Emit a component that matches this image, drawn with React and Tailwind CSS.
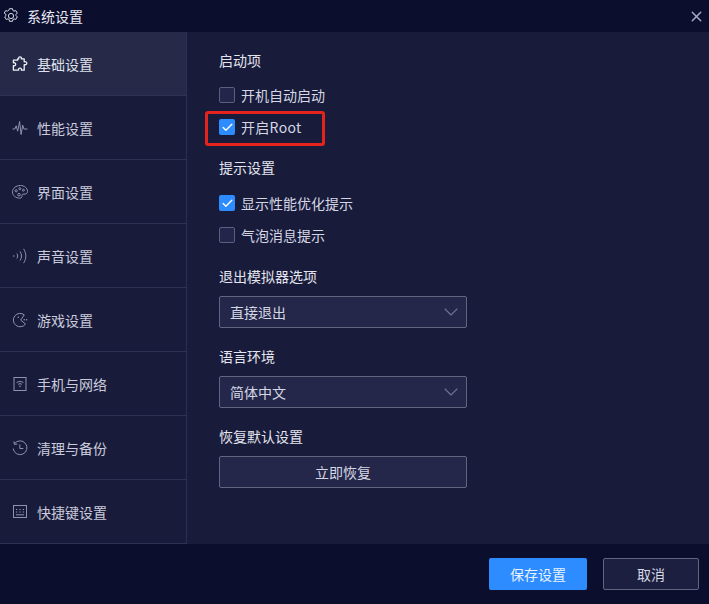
import { FiX, FiChevronDown, FiCheck } from "react-icons/fi";

const FONT = "font-['Noto_Sans_CJK_SC','Noto_Sans',sans-serif]";

// ─── Sidebar icons ───────────────────────────────────────────────────────────
function Gear({ className }) {
  return (
    <svg viewBox="0 0 16 16" className={className} fill="none" stroke="currentColor" strokeWidth="1">
      <path d="M6.500.7h3l.4 1.800 1.100.6 1.800-.5 1.500 2.500-1.300 1.300v1.200l1.300 1.300-1.500 2.500-1.800-.5-1.100.6-.4 1.800h-3l-.4-1.800-1.100-.6-1.800.5-1.500-2.500 1.300-1.300V6.400L1.200 5.100l1.500-2.500 1.800.5 1.100-.6z" strokeLinejoin="round" />
      <circle cx="8" cy="8" r="2.600" />
    </svg>
  );
}

function Puzzle({ className }) {
  return (
    <svg viewBox="0 0 16 16" className={className} fill="none" stroke="currentColor" strokeWidth="1.300" strokeLinejoin="round">
      <path d="M5.600 2.800h1.100C6.300 1 7.200.8 8 .8s1.700.4 1.300 2h2.900v3c1.600-.5 2.600.4 2.600 1.400s-1 1.900-2.600 1.400v5.600H9.400c.4-1.400-.4-2.100-1.400-2.100s-1.800.7-1.400 2.100H1.400V9.600c1.400.5 2.300-.4 2.300-1.400S2.800 6.400 1.400 6.900V4.200h4.200z" />
    </svg>
  );
}

function Pulse({ className }) {
  return (
    <svg viewBox="0 0 16 16" className={className} fill="none" stroke="currentColor" strokeWidth="1">
      <path d="M.5 9h2.300l1.400-3.200 1.500 5.400L7.600 1.500l1.500 13 1.600-9.300 1.200 3.800h3.600" strokeLinejoin="round" />
    </svg>
  );
}

function Palette({ className }) {
  return (
    <svg viewBox="0 0 16 16" className={className} fill="none" stroke="currentColor" strokeWidth="1">
      <path d="M8.300 1.500c3.900 0 7.200 2.500 7.200 5.900 0 2.300-2 2.900-3.500 2.700-1.300-.2-2.400.4-2.100 1.700.3 1.300-.4 2.400-2.100 2.400C3.700 14.200.5 11.500.5 7.900.5 4.300 4.100 1.500 8.300 1.500z" />
      <circle cx="4.200" cy="6.800" r="1.100" />
      <circle cx="7.800" cy="4.700" r="1" />
      <circle cx="11.400" cy="6.200" r="1" />
      <circle cx="7" cy="10.700" r="1.300" />
    </svg>
  );
}

function Sound({ className }) {
  return (
    <svg viewBox="0 0 16 16" className={className} fill="none" stroke="currentColor" strokeWidth="1" strokeLinecap="round">
      <circle cx="1.800" cy="8" r=".8" fill="currentColor" stroke="none" />
      <path d="M5 5.800c1 1.400 1 3 0 4.400" />
      <path d="M8.300 3.800c1.700 2.700 1.700 5.700 0 8.400" />
      <path d="M11.800 1.200c2.800 4.500 2.800 9.100 0 13.600" />
    </svg>
  );
}

function Pacman({ className }) {
  return (
    <svg viewBox="0 0 16 16" className={className} fill="none" stroke="currentColor" strokeWidth="1" strokeLinejoin="round">
      <path d="M12.300 2.900A6.700 6.700 0 1 0 13.500 12L8.700 8.100z" />
      <circle cx="6.300" cy="5.200" r=".8" fill="currentColor" stroke="none" />
      <circle cx="12.300" cy="7.800" r=".8" fill="currentColor" stroke="none" />
      <circle cx="14.600" cy="7.800" r=".8" fill="currentColor" stroke="none" />
    </svg>
  );
}

function WifiBox({ className }) {
  return (
    <svg viewBox="0 0 16 16" className={className} fill="none" stroke="currentColor" strokeWidth="1">
      <rect x="2" y="1.500" width="12" height="13" />
      <path d="M4.600 6.600c2-1.500 4.800-1.500 6.800 0" />
      <path d="M6 8.400c1.200-.9 2.800-.9 4 0" />
      <circle cx="8" cy="10.300" r=".8" fill="currentColor" stroke="none" />
    </svg>
  );
}

function History({ className }) {
  return (
    <svg viewBox="0 0 16 16" className={className} fill="none" stroke="currentColor" strokeWidth="1">
      <path d="M2.400 3.800A6.900 6.900 0 1 1 1.200 8.500" />
      <path d="M2 1.300l.3 3 3-.3" />
      <path d="M7.800 4.500v4h3.600" />
    </svg>
  );
}

function Keyboard({ className }) {
  return (
    <svg viewBox="0 0 16 16" className={className} fill="none" stroke="currentColor" strokeWidth="1">
      <rect x="1.500" y="1.500" width="13" height="12" />
      <path d="M4 5.500h1.300M7.300 5.500h1.300M10.700 5.500H12M4 8h1.300M7.300 8h1.300M10.700 8H12M4 10.800h8" />
    </svg>
  );
}

const NAV = [
  { label: "基础设置", Icon: Puzzle, active: true },
  { label: "性能设置", Icon: Pulse },
  { label: "界面设置", Icon: Palette },
  { label: "声音设置", Icon: Sound },
  { label: "游戏设置", Icon: Pacman },
  { label: "手机与网络", Icon: WifiBox },
  { label: "清理与备份", Icon: History },
  { label: "快捷键设置", Icon: Keyboard },
];

// ─── Small pieces ────────────────────────────────────────────────────────────
function Check({ label, checked, labelClass = "" }) {
  return (
    <div className="flex items-center gap-[6px] h-[16px] text-[14px] text-[#d5d7e4]">
      {checked ? (
        <span className="w-[16px] h-[16px] rounded-[2px] bg-[#2d8cff] flex items-center justify-center text-white">
          <FiCheck size={13} strokeWidth={2.5} />
        </span>
      ) : (
        <span className="w-[16px] h-[16px] rounded-[2px] border border-[#5b5e7c] bg-[#23264a]" />
      )}
      <span className={`leading-[16px] ${labelClass}`}>{label}</span>
    </div>
  );
}

function Heading({ children, className = "" }) {
  return <p className={`text-[14px] leading-[16px] text-[#e4e5ee] ${className}`}>{children}</p>;
}

function Select({ value }) {
  return (
    <div className="w-[248px] h-[32px] rounded-[2px] border border-[#62657f] bg-[#24274a] flex items-center justify-between pl-[10px] pr-[3px] text-[14px] text-[#d5d7e4]">
      <span>{value}</span>
      <FiChevronDown size={24} strokeWidth={1.1} className="text-[#6f7293]" />
    </div>
  );
}

// ─── Main component ──────────────────────────────────────────────────────────
export default function App() {
  return (
    <div className={`w-[709px] h-[604px] flex flex-col bg-[#191b3b] ${FONT}`}>
      {/* Title bar */}
      <div className="h-[32px] shrink-0 bg-[#0c0e2e] flex items-center justify-between pl-[3px] pr-[4px]">
        <div className="flex items-center gap-[8px] text-[14px] text-[#e8e9f2]">
          <Gear className="w-[16px] h-[16px] text-[#d8d9e6]" />
          <span>系统设置</span>
        </div>
        <FiX size={17} className="text-[#a9abc6]" />
      </div>

      <div className="flex-1 flex min-h-0">
        {/* Sidebar */}
        <div className="w-[187px] shrink-0 border-r border-[#2c2f50] flex flex-col">
          {NAV.map(({ label, Icon, active }) => (
            <div
              key={label}
              className={`h-[64px] flex items-center gap-[9px] pl-[12px] border-b border-[#2f3253] text-[14px] ${
                active ? "bg-[#262a48] text-[#dfe1ec]" : "text-[#c9cbdc]"
              }`}
            >
              <Icon className={`w-[16px] h-[16px] ${active ? "text-[#f0f1f6]" : "text-[#9092ad]"}`} />
              <span className="pt-[2px]">{label}</span>
            </div>
          ))}
        </div>

        {/* Content */}
        <div className="flex-1 pl-[32px] pt-[20px]">
          <Heading>启动项</Heading>
          <div className="mt-[19px] flex flex-col gap-[16px]">
            <Check label="开机自动启动" />
            <div className="relative">
              <Check label="开启Root" labelClass="tracking-[0.3px]" checked />
              <div className="absolute left-[-14px] top-[-8px] w-[120px] h-[35px] rounded-[3px] border-[3px] border-[#e3231c]" />
            </div>
          </div>

          <Heading className="mt-[24px]">提示设置</Heading>
          <div className="mt-[20px] flex flex-col gap-[16px]">
            <Check label="显示性能优化提示" checked />
            <Check label="气泡消息提示" />
          </div>

          <Heading className="mt-[25px]">退出模拟器选项</Heading>
          <div className="mt-[12px]"><Select value="直接退出" /></div>

          <Heading className="mt-[20px]">语言环境</Heading>
          <div className="mt-[12px]"><Select value="简体中文" /></div>

          <Heading className="mt-[20px]">恢复默认设置</Heading>
          <button className="mt-[12px] w-[248px] h-[32px] rounded-[2px] border border-[#62657f] bg-[#24274a] text-[14px] text-[#d5d7e4]">
            立即恢复
          </button>
        </div>
      </div>

      {/* Footer */}
      <div className="h-[60px] shrink-0 bg-[#0c0e2e] flex items-center justify-end gap-[16px] pr-[10px]">
        <button className="w-[98px] h-[32px] rounded-[2px] bg-[#2d8cff] text-[14px] text-[#e8f2ff]">保存设置</button>
        <button className="w-[96px] h-[32px] rounded-[2px] border border-[#62657f] bg-[#1c1f3f] text-[14px] text-[#d5d7e4]">取消</button>
      </div>
    </div>
  );
}
